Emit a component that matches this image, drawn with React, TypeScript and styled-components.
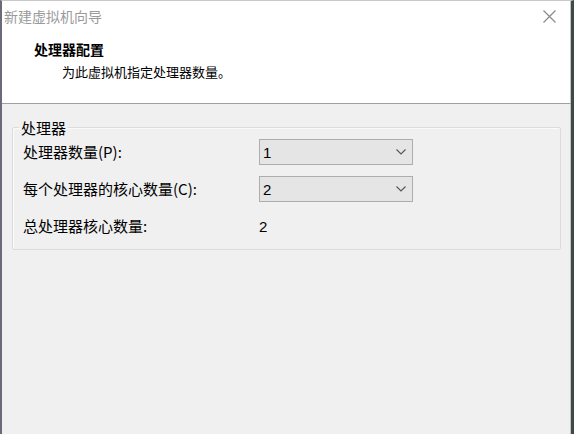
import React from "react";
import styled, { createGlobalStyle } from "styled-components";

const Global = createGlobalStyle`
  html, body { margin: 0; padding: 0; }
  body {
    width: 574px;
    height: 434px;
    overflow: hidden;
    font-family: "Noto Sans CJK SC", "Microsoft YaHei", sans-serif;
    color: #000;
  }
`;

const Window = styled.div`
  box-sizing: border-box;
  width: 574px;
  height: 434px;
  display: flex;
  flex-direction: column;
  border-left: 2px solid #6a6a7a;
  border-right: 3px solid #3e4a46;
  border-top: 1px solid #c8c8c8;
  background: #f0f0f0;
`;

const Header = styled.div`
  background: #ffffff;
  height: 102px;
  display: flex;
  flex-direction: column;
  border-bottom: 1px solid #a0a0a0;
  border-right: 1px solid #c4c4c4;
`;

const TitleBar = styled.div`
  height: 30px;
  display: flex;
  align-items: center;
  justify-content: space-between;
  padding: 0 14px 0 2px;
`;

const Title = styled.div`
  font-size: 14px;
  color: #9a9a9a;
  line-height: 1;
`;

const Close = styled.svg`
  width: 13px;
  height: 13px;
`;

const Heading = styled.div`
  padding: 9px 0 0 32px;
  display: flex;
  flex-direction: column;
  gap: 5px;
`;

const HeadTitle = styled.div`
  font-size: 14px;
  font-weight: 700;
  line-height: 18px;
`;

const HeadSub = styled.div`
  font-size: 13px;
  line-height: 18px;
  padding-left: 28px;
`;

const Body = styled.div`
  flex: 1;
  padding: 16px 9px 0 10px;
  border-right: 1px solid #c4c4c4;
`;

const Group = styled.fieldset`
  margin: 0;
  box-sizing: border-box;
  height: 130px;
  border: 1px solid #dcdcdc;
  border-radius: 2px;
  padding: 4px 0 0 10px;
  box-shadow: inset 1px 1px 0 #fafafa;
`;

const Legend = styled.legend`
  font-size: 15px;
  line-height: 15px;
  padding: 0 2px;
  margin-left: -4px;
`;

const Rows = styled.div`
  display: grid;
  grid-template-columns: 236px 154px;
  grid-auto-rows: 26px;
  row-gap: 11px;
  align-items: center;
`;

const Label = styled.div`
  font-size: 15px;
  line-height: 18px;
  white-space: nowrap;
`;

const Select = styled.div`
  box-sizing: border-box;
  height: 26px;
  border: 1px solid #adadad;
  background: #e5e5e5;
  display: flex;
  align-items: center;
  justify-content: space-between;
  padding: 0 6px 0 3px;
  font-size: 15px;
  font-family: "Liberation Sans", "Noto Sans CJK SC", sans-serif;
`;

const Value = styled.div`
  font-size: 15px;
  font-family: "Liberation Sans", sans-serif;
`;

const Chevron = () => (
  <svg width="10" height="6" viewBox="0 0 10 6">
    <path d="M0.5 0.5 L5 5 L9.5 0.5" fill="none" stroke="#555" strokeWidth="1.1" />
  </svg>
);

export default function App() {
  return (
    <>
      <Global />
      <Window>
        <Header>
          <TitleBar>
            <Title>新建虚拟机向导</Title>
            <Close viewBox="0 0 13 13">
              <path d="M0.5 0.5 L12.5 12.5 M12.5 0.5 L0.5 12.5" stroke="#8a8a8a" strokeWidth="1.2" />
            </Close>
          </TitleBar>
          <Heading>
            <HeadTitle>处理器配置</HeadTitle>
            <HeadSub>为此虚拟机指定处理器数量。</HeadSub>
          </Heading>
        </Header>
        <Body>
          <Group>
            <Legend>处理器</Legend>
            <Rows>
              <Label>处理器数量(P):</Label>
              <Select>
                <span>1</span>
                <Chevron />
              </Select>
              <Label>每个处理器的核心数量(C):</Label>
              <Select>
                <span>2</span>
                <Chevron />
              </Select>
              <Label>总处理器核心数量:</Label>
              <Value>2</Value>
            </Rows>
          </Group>
        </Body>
      </Window>
    </>
  );
}
